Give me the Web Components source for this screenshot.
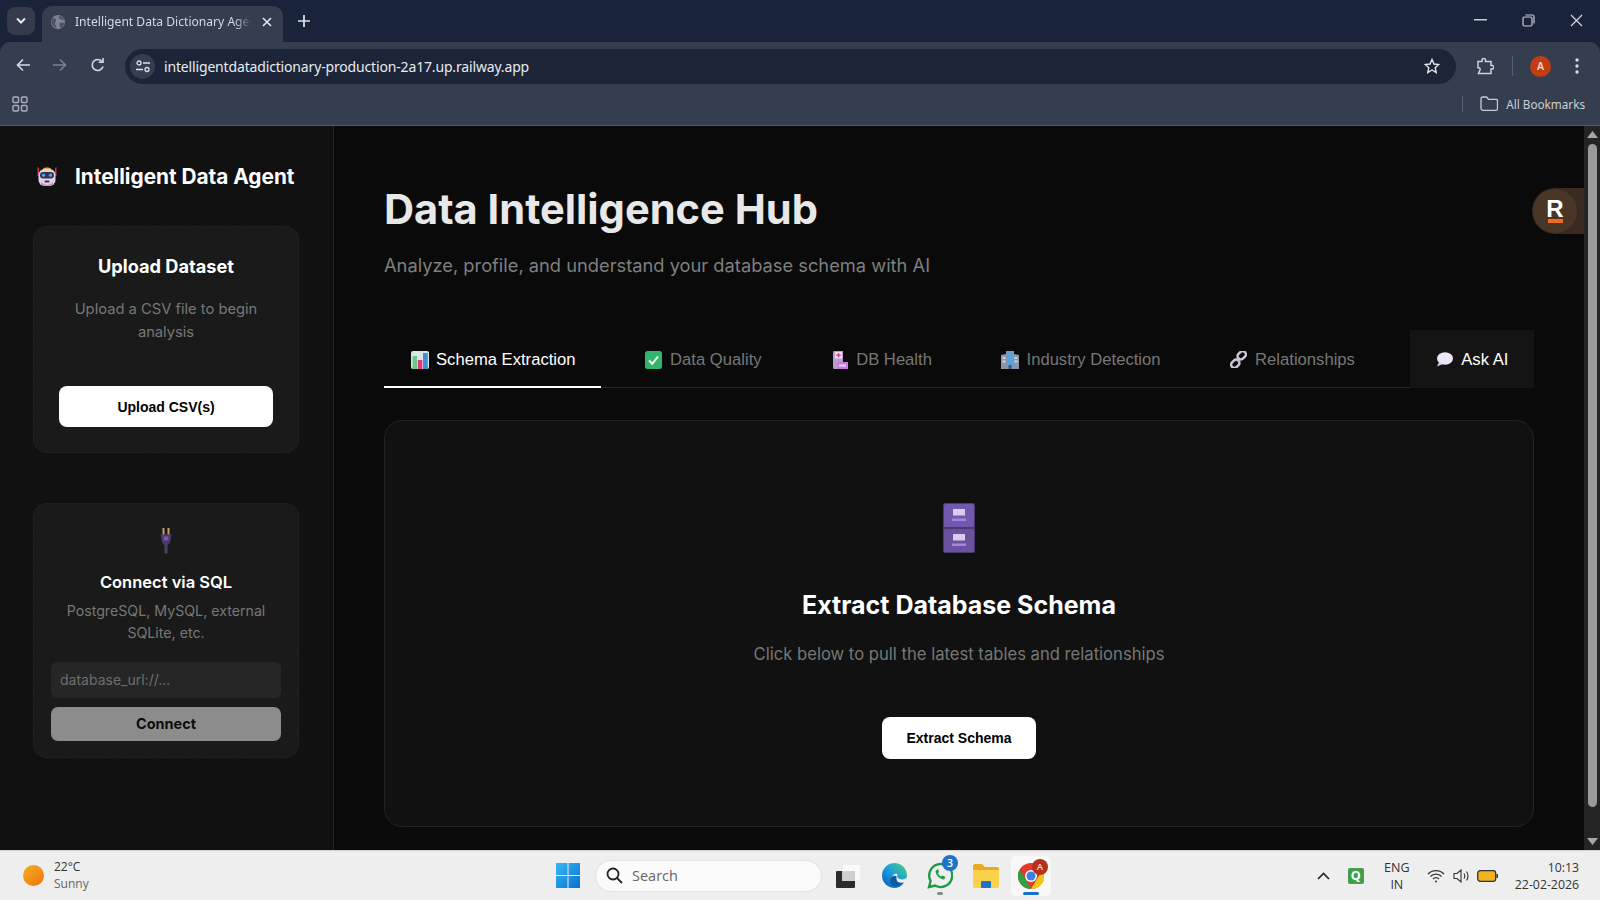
<!DOCTYPE html>
<html lang="en">
<head>
<meta charset="utf-8">
<title>Data Intelligence Hub</title>
<style>
  html, body { margin: 0; height: 100%; background: #0a0a0a; overflow: hidden; }
  body { display: flex; flex-direction: column; width: 1600px; height: 900px; font-family: Inter, "Liberation Sans", sans-serif; }
  .viewport { display: flex; height: 724px; position: relative; }
</style>
</head>
<body>
<browser-chrome url="intelligentdatadictionary-production-2a17.up.railway.app" tab="Intelligent Data Dictionary Ager"></browser-chrome>
<div class="viewport">
  <side-bar heading="Intelligent Data Agent">
    <upload-card heading="Upload Dataset" action="Upload CSV(s)">Upload a CSV file to begin analysis</upload-card>
    <sql-card heading="Connect via SQL" action="Connect" placeholder="database_url://...">PostgreSQL, MySQL, external SQLite, etc.</sql-card>
  </side-bar>
  <hub-main heading="Data Intelligence Hub" sub="Analyze, profile, and understand your database schema with AI">
    <hub-tab slot="tabs" icon="chart" active>Schema Extraction</hub-tab>
    <hub-tab slot="tabs" icon="check">Data Quality</hub-tab>
    <hub-tab slot="tabs" icon="health">DB Health</hub-tab>
    <hub-tab slot="tabs" icon="office">Industry Detection</hub-tab>
    <hub-tab slot="tabs" icon="link">Relationships</hub-tab>
    <hub-tab slot="tabs" icon="speech" ask>Ask AI</hub-tab>
    <schema-panel heading="Extract Database Schema" action="Extract Schema">Click below to pull the latest tables and relationships</schema-panel>
  </hub-main>
  <page-scrollbar></page-scrollbar>
  <railway-badge></railway-badge>
</div>
<task-bar></task-bar>

<script>
const icons = {
  robot: `<svg viewBox="0 0 22 22" width="22" height="22"><path d="M1.500 2 3 3v8H1.500zM20.500 2 19 3v8h1.500z" fill="#c9304f"/><path d="M7 4c0-2 8-2 8 0v1H7z" fill="#e2a93b"/><rect x="2.500" y="4" width="17" height="17" rx="6" fill="#e8cfe6"/><path d="M5 17c4 3.500 8 3.500 12 0v2.500c-3 1.800-9 1.800-12 0z" fill="#bb94c4"/><rect x="4" y="7" width="14" height="6.500" rx="3.200" fill="#30344f"/><circle cx="7.500" cy="10.200" r="1.600" fill="#52a8ee"/><circle cx="14.500" cy="10.200" r="1.600" fill="#52a8ee"/><rect x="8.500" y="15.500" width="5" height="2" rx="1" fill="#3d3550"/></svg>`,
  plug: `<svg viewBox="0 0 14 26" width="14" height="26"><rect x="3.500" y="0" width="2" height="7" fill="#cf9d63"/><rect x="8.500" y="0" width="2" height="7" fill="#cf9d63"/><path d="M1.500 6.500h11l-1.500 8-2 2.500H5l-2-2.500z" fill="#4a3a66"/><rect x="4.700" y="8.500" width="4.600" height="4" fill="#7d55c0"/><rect x="5.500" y="17" width="3" height="8.500" fill="#4b4552"/></svg>`,
  cabinet: `<svg viewBox="0 0 32 50" width="32" height="50"><rect width="32" height="50" rx="2.500" fill="#4b3a70"/><rect x="1" y="1" width="30" height="23" rx="1.500" fill="#7159ad"/><rect x="1" y="26" width="30" height="23" rx="1.500" fill="#6a529f"/><rect x="10" y="6" width="12" height="6.500" fill="#d8cdee"/><rect x="9" y="15.500" width="14" height="2.500" fill="#a385e2"/><rect x="10" y="31" width="12" height="6.500" fill="#d8cdee"/><rect x="9" y="40.500" width="14" height="2.500" fill="#a385e2"/></svg>`,
  chart: `<svg viewBox="0 0 18 18" width="18" height="18"><rect width="18" height="18" rx="2" fill="#dbe6e4"/><rect x="1.500" y="5" width="4.500" height="13" fill="#69c98c"/><rect x="6.800" y="9" width="4.500" height="9" fill="#e8347f"/><rect x="12" y="2" width="4.800" height="16" fill="#3f8fd8"/></svg>`,
  check: `<svg viewBox="0 0 17 18" width="17" height="18"><rect width="17" height="18" rx="2.500" fill="#31b56e"/><path d="M4 9.500 7.200 12.800 13 5.500" fill="none" stroke="#fff" stroke-width="2"/></svg>`,
  health: `<svg viewBox="0 0 16 18" width="16" height="18"><path d="M1 1.500C1 .700 1.700 0 2.500 0H11v18H2.500C1.700 18 1 17.300 1 16.500z" fill="#b79ad0"/><rect x="3" y="1" width="7" height="6.500" fill="#f3dcee"/><path d="M5.800 2h1.500v1.500h1.500V5H7.300v1.500H5.800V5H4.300V3.500h1.500z" fill="#e0457f"/><rect x="5" y="11" width="11" height="7" fill="#c77ed8"/><rect x="7" y="13.500" width="7" height="2" fill="#eacbf1"/></svg>`,
  office: `<svg viewBox="0 0 18 18" width="18" height="18"><path d="M0 4 5 3V0h8v3l5 1v14H0z" fill="#8a96a8"/><path d="M6 1.500h6V16H6z" fill="#5ba2d9"/><path d="M1.500 6h3v2h-3zM1.500 9.500h3v2h-3zM13.500 6h3v2h-3zM13.500 9.500h3v2h-3z" fill="#bed5ea"/><rect x="7.500" y="14" width="3" height="4" fill="#54505e"/></svg>`,
  link: `<svg viewBox="0 0 17 17" width="17" height="17" fill="none" stroke="#cfc6db" stroke-width="2.500"><rect x="7.200" y="1" width="9" height="6.500" rx="3.200" transform="rotate(-45 11.700 4.200)"/><rect x=".8" y="9.500" width="9" height="6.500" rx="3.200" transform="rotate(-45 5.300 12.800)"/></svg>`,
  speech: `<svg viewBox="0 0 17 15" width="17" height="15"><ellipse cx="9" cy="6.500" rx="8" ry="6.200" fill="#ece6f7"/><path d="M3 10 1 14.500 7 12z" fill="#d8cdea"/></svg>`
};

class HubIcon extends HTMLElement {
  connectedCallback() {
    const root = this.shadowRoot || this.attachShadow({ mode: 'open' });
    root.innerHTML = `<style>:host{display:inline-flex;align-items:center;justify-content:center;line-height:0}</style>${icons[this.getAttribute('name')] || ''}`;
  }
}
customElements.define('hub-icon', HubIcon);

class BrowserChrome extends HTMLElement {
  connectedCallback() {
    const root = this.attachShadow({ mode: 'open' });
    root.innerHTML = `
<style>
  :host{display:block;height:126px;background:#19233a;font-family:"Noto Sans","Open Sans",sans-serif;color:#e3e6ec;flex:none}
  svg{display:block}
  .strip{height:42px;display:flex;align-items:flex-end;padding-left:7px;box-sizing:border-box}
  .chev{width:28px;height:28px;margin-bottom:7px;border-radius:8px;background:#343c4c;display:flex;align-items:center;justify-content:center}
  .tab{width:241px;height:36px;margin-left:7px;background:#353e4e;border-radius:10px 10px 0 0;display:flex;align-items:center;box-sizing:border-box;padding:0 0 5px 9px}
  .tab .fav{margin-right:10px;flex:none}
  .tab .title{width:177px;white-space:nowrap;font-size:12.100px;color:#d4d8df;-webkit-mask-image:linear-gradient(90deg,#000 90%,transparent)}
  .tab .x{margin-left:10px}
  .plus{margin:0 0 15px 15px}
  .win{margin-left:auto;display:flex;align-self:flex-start;align-items:center;height:40px;gap:35px;padding-right:17px}
  .bar{height:42px;background:#353e4e;display:flex;align-items:center;border-radius:10px 10px 0 0;padding-left:16px;box-sizing:border-box}
  .nav{display:flex;align-items:center;gap:23px;width:109px;flex:none;margin-top:4px}
  .omni{width:1331px;height:35px;margin-top:6px;background:#1b2537;border-radius:18px;display:flex;align-items:center;box-sizing:border-box;padding:0 16px 0 5px}
  .site{width:25px;height:25px;border-radius:50%;background:#353e4e;display:flex;align-items:center;justify-content:center;margin-right:9px}
  .url{font-size:14px;letter-spacing:-.16px;color:#e8ebf0;white-space:nowrap;flex:1}
  .actions{display:flex;align-items:center;margin-top:6px}
  .sep{width:1px;height:20px;background:#56606f}
  .avatar{width:21px;height:21px;border-radius:50%;background:#c33d14;color:#f7d8cc;font:600 10.500px/21px "Noto Sans",sans-serif;text-align:center}
  .marks{height:42px;background:#353e4e;border-bottom:1px solid #555c68;display:flex;align-items:center;padding:0 0 2px 12px;box-sizing:border-box;font-size:11.700px;color:#c9ced7}
  .marks .right{margin-left:auto;display:flex;align-items:center;padding-right:15px}
</style>
<div class="strip">
  <div class="chev"><svg width="12" height="8" viewBox="0 0 12 8" fill="none" stroke="#e4e7ec" stroke-width="2"><path d="M2 1.500 6 5.500 10 1.500"/></svg></div>
  <div class="tab">
    <svg class="fav" width="14" height="14" viewBox="0 0 14 14"><circle cx="7" cy="7" r="7" fill="#7d8490"/><path d="M2 3c2 0 3 1 3 2.500S3.500 7.500 4 9s1.500 2 1.500 4C3 12 1 10 .5 7 .5 5 1 4 2 3zM8 1c2 0 4 1.500 5 3.500-1.500.5-3 0-4-.5S7.500 2 8 1zM9 8c1.500-.5 3-.5 4.500 0-.5 2.500-2 4.500-4 5-1-1.500-1.500-3.500-.5-5z" fill="#4c5461"/></svg>
    <span class="title">${this.getAttribute('tab')}</span>
    <svg class="x" width="10" height="10" viewBox="0 0 10 10" stroke="#e3e6ec" stroke-width="1.600"><path d="M1 1 9 9M9 1 1 9"/></svg></div>
  <svg class="plus" width="12" height="12" viewBox="0 0 12 12" stroke="#e3e6ec" stroke-width="1.700"><path d="M6 0v12M0 6h12"/></svg>
  <div class="win">
    <svg width="13" height="2" viewBox="0 0 13 2"><rect width="13" height="1.500" fill="#c7ccd6"/></svg>
    <svg width="13" height="13" viewBox="0 0 13 13" fill="none" stroke="#c7ccd6" stroke-width="1.200"><rect x="1" y="3" width="9" height="9" rx="1.500"/><path d="M3.500 1h7c1 0 1.500.500 1.500 1.500v7"/></svg>
    <svg width="13" height="13" viewBox="0 0 13 13" stroke="#d6dae2" stroke-width="1.200"><path d="M1 1 12 12M12 1 1 12"/></svg>
  </div>
</div>
<div class="bar">
  <div class="nav">
    <svg width="14" height="14" viewBox="0 0 14 14" fill="none" stroke="#d6dae2" stroke-width="1.600"><path d="M14 7H1.500M7 1.500 1.500 7 7 12.500"/></svg>
    <svg width="14" height="14" viewBox="0 0 14 14" fill="none" stroke="#7a828f" stroke-width="1.600"><path d="M0 7h12.500M7 1.500 12.500 7 7 12.500"/></svg>
    <svg width="16" height="16" viewBox="0 0 16 16" fill="none" stroke="#d6dae2" stroke-width="1.600"><path d="M13 9.500A5.500 5.500 0 1 1 12 4.500"/><path d="M13 1v4.200H8.800" /></svg>
  </div>
  <div class="omni">
    <div class="site"><svg width="14" height="13" viewBox="0 0 14 13" fill="none" stroke="#dde0e6" stroke-width="1.300"><circle cx="3" cy="3" r="2"/><path d="M7 3h7M0 9.500h7"/><circle cx="11" cy="9.500" r="2"/></svg></div>
    <span class="url">${this.getAttribute('url')}</span>
    <svg width="16" height="16" viewBox="0 0 16 16" fill="none" stroke="#e3e6ec" stroke-width="1.400"><path d="M8 1.500 10 6l4.800.500-3.600 3.200 1 4.800L8 12l-4.200 2.500 1-4.800L1.200 6.500 6 6z"/></svg>
  </div>
  <div class="actions">
    <svg style="margin-left:20px" width="18" height="18" viewBox="0 0 18 18" fill="none" stroke="#cdd1d9" stroke-width="1.500"><path d="M2 4.500h4V3c0-2 3.500-2 3.500 0v1.500H15v4h1.500c1.500 0 1.500 3.500 0 3.500H15v4.500H2.500l1.500-3.500c1-2-2-3-2-1.500z"/></svg>
    <span class="sep" style="margin-left:18px"></span>
    <span class="avatar" style="margin-left:17px">A</span>
    <svg style="margin-left:24px" width="4" height="16" viewBox="0 0 4 16" fill="#d6dae2"><circle cx="2" cy="2" r="1.700"/><circle cx="2" cy="8" r="1.700"/><circle cx="2" cy="14" r="1.700"/></svg>
  </div>
</div>
<div class="marks">
  <svg width="16" height="16" viewBox="0 0 16 16" fill="none" stroke="#aab0bb" stroke-width="1.400"><rect x="1" y="1" width="5.500" height="5.500" rx="1"/><rect x="9.500" y="1" width="5.500" height="5.500" rx="1"/><rect x="1" y="9.500" width="5.500" height="5.500" rx="1"/><rect x="9.500" y="9.500" width="5.500" height="5.500" rx="1"/></svg>
  <div class="right">
    <span class="sep" style="height:16px;margin-right:17px"></span>
    <svg width="18" height="15" viewBox="0 0 18 15" fill="none" stroke="#c9ced7" stroke-width="1.300"><path d="M1 2.500C1 1.500 1.500 1 2.500 1h4l2 2.300h7.500c1 0 1.500.500 1.500 1.500v8c0 1-.500 1.500-1.500 1.500h-13C1.500 14 1 13.500 1 12.500z"/></svg>
    <span style="margin-left:8px">All Bookmarks</span>
  </div>
</div>`;
  }
}
customElements.define('browser-chrome', BrowserChrome);

const sideTemplate = document.createElement('template');
sideTemplate.innerHTML = `
<style>
  :host{display:flex;flex-direction:column;width:334px;flex:none;box-sizing:border-box;background:#111;border-right:1px solid #222;padding:38px 34px 0 33px}
  .brand{display:flex;align-items:center;height:24px;margin-left:3px;margin-bottom:38px;gap:17px;color:#fff;font:700 20.800px/25px Inter,sans-serif;white-space:nowrap}
  .cards{display:flex;flex-direction:column;gap:50px}
</style>
<div class="brand"><hub-icon name="robot"></hub-icon><span id="t"></span></div>
<div class="cards"><slot></slot></div>`;
class SideBar extends HTMLElement {
  constructor() {
    super();
    this.attachShadow({ mode: 'open' }).appendChild(sideTemplate.content.cloneNode(true));
  }
  connectedCallback() { this.shadowRoot.getElementById('t').textContent = this.getAttribute('heading'); }
}
customElements.define('side-bar', SideBar);

class UploadCard extends HTMLElement {
  connectedCallback() {
    this.attachShadow({ mode: 'open' }).innerHTML = `
<style>
  :host{display:block;box-sizing:border-box;height:227px;background:#1a1a1a;border:1px dashed #242424;border-radius:14px;padding:27px 25px 0;text-align:center;font-family:Inter,sans-serif}
  h3{margin:0 0 20px;font:700 18.200px/24px Inter,sans-serif;color:#fff}
  p{margin:0 auto 42px;font:400 14.720px/23px Inter,sans-serif;color:#777;width:190px}
  button{display:block;width:100%;height:41px;background:#fff;color:#000;border:0;border-radius:8px;font:700 14px "Liberation Sans",sans-serif}
</style>
<h3>${this.getAttribute('heading')}</h3><p><slot></slot></p><button>${this.getAttribute('action')}</button>`;
  }
}
customElements.define('upload-card', UploadCard);

class SqlCard extends HTMLElement {
  connectedCallback() {
    this.attachShadow({ mode: 'open' }).innerHTML = `
<style>
  :host{display:block;box-sizing:border-box;height:255px;background:#1a1a1a;border:1px dashed #242424;border-radius:14px;padding:24px 17px 0;text-align:center;font-family:Inter,sans-serif}
  hub-icon{display:flex;height:26px;margin-bottom:16px}
  h3{margin:0 0 6px;font:600 16.500px/24px Inter,sans-serif;color:#fff}
  p{margin:0 0 17px;font:400 14.200px/22.400px Inter,sans-serif;color:#777}
  .field{height:36px;background:#262626;border-radius:6px;margin-bottom:9px;padding-left:9px;display:flex;align-items:center;font:400 14px Inter,sans-serif;color:#6e6e6e}
  button{display:block;width:100%;height:34px;background:#8c8c8c;color:#0c0c0c;border:0;border-radius:7px;font:700 14.500px Inter,sans-serif}
</style>
<hub-icon name="plug"></hub-icon>
<h3>${this.getAttribute('heading')}</h3><p><slot></slot></p>
<div class="field">${this.getAttribute('placeholder')}</div><button>${this.getAttribute('action')}</button>`;
  }
}
customElements.define('sql-card', SqlCard);

class HubMain extends HTMLElement {
  connectedCallback() {
    this.attachShadow({ mode: 'open' }).innerHTML = `
<style>
  :host{display:block;flex:1;min-width:0;box-sizing:border-box;background:#0a0a0a;padding:56px 50px 0}
  h1{margin:0;font:700 41.600px/54px Inter,sans-serif;color:#e8e8e8}
  .sub{margin:14px 0 50px;font:400 18.300px/30px Inter,sans-serif;color:#7f7f7f}
  .tabs{display:flex;height:57px;gap:17px;border-bottom:1px solid #262626;margin-bottom:32px}
</style>
<h1>${this.getAttribute('heading')}</h1>
<div class="sub">${this.getAttribute('sub')}</div>
<div class="tabs"><slot name="tabs"></slot></div>
<slot></slot>`;
  }
}
customElements.define('hub-main', HubMain);

class HubTab extends HTMLElement {
  connectedCallback() {
    this.attachShadow({ mode: 'open' }).innerHTML = `
<style>
  :host{display:flex;align-items:center;gap:6.400px;height:58px;box-sizing:border-box;padding:3px 25.600px 0;font:400 16.640px "Liberation Sans",sans-serif;color:#777;white-space:nowrap;border-bottom:2px solid transparent}
  :host([active]){color:#fff;border-bottom-color:#fff}
  :host([ask]){color:#fff;background:#141414;margin-left:auto;border-bottom-color:#141414;padding-left:25px}
  hub-icon{width:20px}
</style>
<hub-icon name="${this.getAttribute('icon')}"></hub-icon><slot></slot>`;
  }
}
customElements.define('hub-tab', HubTab);

class SchemaPanel extends HTMLElement {
  connectedCallback() {
    this.attachShadow({ mode: 'open' }).innerHTML = `
<style>
  :host{display:flex;flex-direction:column;align-items:center;height:407px;box-sizing:border-box;background:#111;border:1px solid #232323;border-radius:18px;padding-top:82px;font-family:Inter,sans-serif}
  h2{margin:34px 0 18px;font:700 25px/36px Inter,sans-serif;color:#fff}
  p{margin:-1px 0 49px;font:400 16.640px/28px Inter,sans-serif;color:#777}
  button{width:154px;height:42px;background:#fff;color:#000;border:0;border-radius:8px;font:700 14px "Liberation Sans",sans-serif}
</style>
<hub-icon name="cabinet"></hub-icon>
<h2>${this.getAttribute('heading')}</h2><p><slot></slot></p><button>${this.getAttribute('action')}</button>`;
  }
}
customElements.define('schema-panel', SchemaPanel);

class PageScrollbar extends HTMLElement {
  connectedCallback() {
    this.attachShadow({ mode: 'open' }).innerHTML = `
<style>
  :host{display:flex;flex-direction:column;align-items:center;width:16px;flex:none;background:#242424;padding:5px 0 5px;box-sizing:border-box;z-index:1}
  .thumb{width:9px;flex:1;margin:6px 0;background:#9a9a9a;border-radius:5px;margin-bottom:31px}
  svg{display:block}
</style>
<svg width="11" height="7" viewBox="0 0 11 7" fill="#a8a8a8"><path d="M5.500 0 11 7H0z"/></svg>
<div class="thumb"></div>
<svg width="11" height="7" viewBox="0 0 11 7" fill="#a8a8a8"><path d="M0 0h11L5.500 7z"/></svg>`;
  }
}
customElements.define('page-scrollbar', PageScrollbar);

class RailwayBadge extends HTMLElement {
  connectedCallback() {
    this.attachShadow({ mode: 'open' }).innerHTML = `
<style>
  :host{position:absolute;top:62px;right:16px;width:52px;height:46px;background:#3a2a1f;border-radius:23px 0 0 23px;display:block}
  .dot{position:absolute;left:1px;top:1px;width:44px;height:44px;border-radius:50%;background:#4a3626;display:flex;flex-direction:column;align-items:center;justify-content:center}
  b{font:800 24px/19px "Liberation Sans",sans-serif;color:#fff}
  i{display:block;width:15px;height:3.500px;background:#f26a1b;margin-top:1px}
</style>
<div class="dot"><b>R</b><i></i></div>`;
  }
}
customElements.define('railway-badge', RailwayBadge);

class TaskBar extends HTMLElement {
  connectedCallback() {
    this.attachShadow({ mode: 'open' }).innerHTML = `
<style>
  :host{display:flex;align-items:center;height:50px;flex:none;box-sizing:border-box;background:#eee;border-top:1px solid #cfcfcf;font-family:"Open Sans","Noto Sans",sans-serif;color:#333}
  svg{display:block}
  .weather{display:flex;align-items:center;width:556px;flex:none;padding:0 0 2px 23px;box-sizing:border-box}
  .sun{width:21px;height:21px;border-radius:50%;background:linear-gradient(135deg,#f3b021,#f0720f);margin:2px 10px 0 0}
  .two{font-size:12px;line-height:17px}
  .two small{display:block;font-size:12px;color:#666}
  .apps{display:flex;align-items:center}
  .search{width:227px;height:32px;margin:0 14px 0 15px;background:#fbfbfb;border:1px solid #e2e2e2;border-radius:16px;box-sizing:border-box;display:flex;align-items:center;padding-left:10px;gap:9px;font-size:14.500px;color:#666}
  .app{position:relative;display:flex;align-items:center;justify-content:center}
  .num{position:absolute;right:-5px;top:-7px;width:16px;height:16px;border-radius:50%;background:#1b74c9;color:#fff;font:600 10.500px/16px "Open Sans",sans-serif;text-align:center}
  .chrome{width:40px;height:40px;background:#f8f8f8;border-radius:5px;margin-left:12px;position:relative;display:flex;align-items:center;justify-content:center}
  .chrome .a{position:absolute;right:3px;top:3px;width:16px;height:16px;border-radius:50%;background:#b5321a;color:#f5d5ca;font:600 9.500px/16px "Open Sans",sans-serif;text-align:center}
  .chrome .under{position:absolute;bottom:1px;left:12px;width:16px;height:3px;border-radius:2px;background:#1273d0}
  .pip{position:absolute;bottom:-6px;left:10px;width:6px;height:3px;border-radius:2px;background:#888}
  .tray{display:flex;align-items:center;margin-left:auto;padding-right:21px}
  .lang{font-size:12.500px;line-height:17px;text-align:center;width:40px;margin:0 10px 0 13px}
  .q{width:16px;height:16px;background:#42a04a;border-radius:2px;color:#fff;font:700 12.500px/16px "Open Sans",sans-serif;text-align:center}
  .clock{font-size:12.300px;line-height:17px;text-align:right;margin-left:17px}
</style>
<div class="weather"><div class="sun"></div><div class="two">22°C<small>Sunny</small></div></div>
<div class="apps">
  <svg width="24" height="25" viewBox="0 0 24 25"><defs><linearGradient id="w" x1="0" y1="0" x2="1" y2="1"><stop offset="0" stop-color="#35b9f3"/><stop offset="1" stop-color="#0b6fd0"/></linearGradient></defs><path d="M0 0h11.500v12H0zM12.500 0H24v12H12.500zM0 13h11.500v12H0zM12.500 13H24v12H12.500z" fill="url(#w)"/></svg>
  <div class="search"><svg width="17" height="17" viewBox="0 0 17 17" fill="none" stroke="#222" stroke-width="1.800"><circle cx="7" cy="7" r="5.500"/><path d="M11 11 16 16"/></svg>Search</div>
  <svg width="25" height="24" viewBox="0 0 25 24"><rect x="6" y="0" width="19" height="17" rx="1.500" fill="#fafafa" stroke="#e4e4e4"/><rect x="0" y="7" width="19" height="17" rx="1" fill="#2b2b2b"/><rect x="6" y="7" width="13" height="10" fill="#cfcfcf"/></svg>
  <svg style="margin-left:21px" width="25" height="25" viewBox="0 0 25 25"><defs><linearGradient id="e" x1="0" y1="1" x2="1" y2="0"><stop offset="0" stop-color="#0c59a4"/><stop offset=".5" stop-color="#1b9de2"/><stop offset="1" stop-color="#54d46c"/></linearGradient></defs><circle cx="12.500" cy="12.500" r="12.500" fill="url(#e)"/><path d="M25 14c-1 2.500-5 3-7.500 2-2.500-1.200-3-3.500-2-5-3-1-6 1.500-5.500 5 .5 3.500 4 6 8.500 6.500C22 22.500 25 18 25 14z" fill="#eee"/><path d="M14.500 16.500c.5 3 4 4 7.500 2.700-2 3.800-7 5.300-10.500 4-3.800-1.400-4-7-2-9 1.500-1.800 4-2 5-.7z" fill="#0b5aa8"/></svg>
  <div class="app" style="margin-left:20px"><svg width="26" height="27" viewBox="0 0 26 27" fill="none" stroke="#1f9a48" stroke-width="2.400"><path d="M2 25l1.600-6A11.500 11.500 0 1 1 8 23.500z"/><path d="M8.500 9c.5 4.500 4 8 8.500 8.500l1.500-2.500-3-1.500-1.500 1c-1.500-.7-2.500-2-3-3l1-1.500L11 7z" fill="#1f9a48" stroke="none"/></svg><span class="num">3</span><span class="pip"></span></div>
  <svg style="margin-left:20px" width="26" height="24" viewBox="0 0 26 24"><path d="M0 2c0-1 1-2 2-2h7l3 3h12c1 0 2 1 2 2v3H0z" fill="#e9a920"/><path d="M0 6h26v16c0 1-1 2-2 2H2c-1 0-2-1-2-2z" fill="#fbd14b"/><rect x="8" y="17" width="10" height="7" rx="1" fill="#1b74c9"/></svg>
  <div class="chrome"><svg width="26" height="26" viewBox="0 0 26 26"><circle cx="13" cy="13" r="13" fill="#e33b2e"/><path d="M13 26A13 13 0 0 1 1.700 6.500L8 17z" fill="#2ea043"/><path d="M13 26 19 16 25 7A13 13 0 0 1 13 26z" fill="#f5c518"/><circle cx="13" cy="13" r="6" fill="#fff"/><circle cx="13" cy="13" r="4.500" fill="#3b82e6"/></svg><span class="a">A</span><span class="under"></span></div>
</div>
<div class="tray">
  <svg width="13" height="8" viewBox="0 0 13 8" fill="none" stroke="#222" stroke-width="1.600"><path d="M1 7 6.500 1.500 12 7"/></svg>
  <span class="q" style="margin-left:18px">Q</span>
  <div class="lang">ENG<br>IN</div>
  <svg width="18" height="14" viewBox="0 0 18 14" fill="none" stroke="#333" stroke-width="1.200"><path d="M1 5a11 11 0 0 1 16 0M3.500 7.500a7.500 7.500 0 0 1 11 0M6 10a4 4 0 0 1 6 0"/><circle cx="9" cy="12.500" r="1" fill="#333" stroke="none"/></svg>
  <svg style="margin-left:8px" width="18" height="14" viewBox="0 0 18 14" fill="none" stroke="#333" stroke-width="1.100"><path d="M1 4.500h3L8 1v12L4 9.500H1zM11 4.500c1 1.500 1 3.500 0 5M13.500 2.500c2 2.500 2 6.500 0 9"/></svg>
  <svg style="margin-left:6px" width="21" height="12" viewBox="0 0 21 12"><rect x=".7" y=".7" width="18" height="10.600" rx="2.500" fill="#f0b31f" stroke="#333" stroke-width="1.300"/><rect x="19.500" y="4" width="1.500" height="4" fill="#333"/></svg>
  <div class="clock">10:13<br>22-02-2026</div>
</div>`;
  }
}
customElements.define('task-bar', TaskBar);
</script>
</body>
</html>
